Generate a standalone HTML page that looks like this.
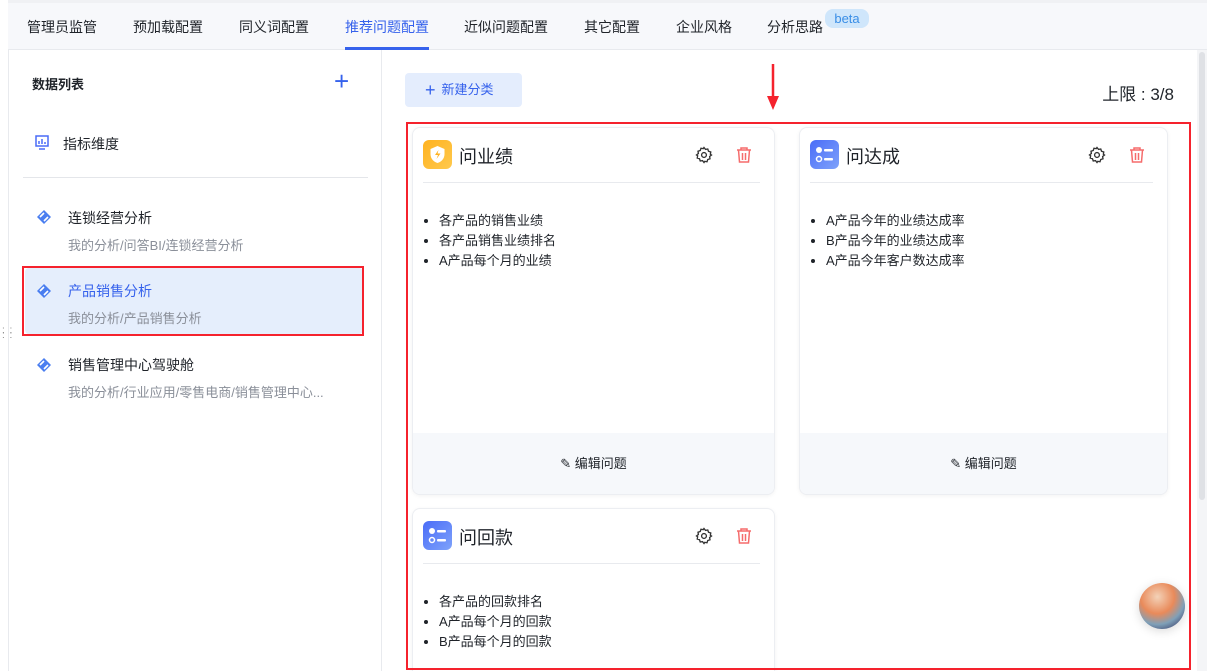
<!DOCTYPE html>
<html><head><meta charset="utf-8"><style>
*{box-sizing:border-box;margin:0;padding:0}
html,body{width:1207px;height:671px;overflow:hidden}
body{background:#fff;font-family:"Liberation Sans","Noto Sans CJK SC",sans-serif;color:#1f2329;position:relative;font-size:14px}
.abs{position:absolute}
.tabs{left:8px;top:0;width:1199px;height:50px;background:#f7f8fb;border-bottom:1px solid #e8eaee;border-top:3px solid #f0f1f4}
.tab{position:absolute;top:14px;font-size:14px;color:#1f2329;white-space:nowrap}
.side{left:8px;top:50px;width:374px;height:621px;border-right:1px solid #e8eaee;border-left:1px solid #e8eaee;background:#fff}
.card{position:absolute;background:#fff;border:1px solid #eceef2;border-radius:8px;box-shadow:0 1px 4px rgba(0,0,0,.05);overflow:hidden}
.ch{position:absolute;left:10px;right:14px;top:0;height:55px;border-bottom:1px solid #e8eaee}
.ch .t{position:absolute;left:36px;top:15px;font-size:18px;color:#1f2329}
.ico{position:absolute;left:0;top:12px;width:29px;height:29px;border-radius:6px}
ul{position:absolute;left:26px;top:83px;font-size:13px;line-height:20px;color:#1f2329}
.ft{position:absolute;left:0;right:0;bottom:0;height:61px;background:#f6f8fb;text-align:center;line-height:61px;font-size:13px}
.red{position:absolute;border:2.5px solid #f5222d}
.item .n{position:absolute;left:59px;font-size:14px}
.item .p{position:absolute;left:59px;font-size:13px;color:#8a8f99}
</style></head><body>
<div class="abs tabs">
<span class="tab" style="left:19px">管理员监管</span>
<span class="tab" style="left:125px">预加载配置</span>
<span class="tab" style="left:231px">同义词配置</span>
<span class="tab" style="left:337px;color:#3662ec">推荐问题配置</span>
<div class="abs" style="left:337px;top:44px;width:84px;height:3px;background:#3662ec"></div>
<span class="tab" style="left:456px">近似问题配置</span>
<span class="tab" style="left:576px">其它配置</span>
<span class="tab" style="left:668px">企业风格</span>
<span class="tab" style="left:759px">分析思路</span>
<span class="abs" style="left:817px;top:6px;width:44px;height:19px;background:#cfe6fb;color:#3a8ee6;border-radius:8px;font-size:13px;text-align:center;line-height:19px">beta</span>
</div>
<div class="abs side">
<div class="abs" style="left:23px;top:24px;font-size:13px;font-weight:bold">数据列表</div>
<div class="abs" style="left:325px;top:16px;font-size:26px;color:#3662ec;font-weight:300;line-height:30px">+</div>
<svg class="abs" style="left:26px;top:85px" width="14" height="16" viewBox="0 0 14 16"><rect x="1" y="1" width="12" height="10" fill="none" stroke="#4a6cf7" stroke-width="1.5"/><path d="M4 9V6M7 9V4M10 9V7M4 14h6" stroke="#4a6cf7" stroke-width="1.5"/></svg>
<div class="abs" style="left:54px;top:84px;font-size:14px">指标维度</div>
<div class="abs" style="left:14px;top:127px;width:345px;height:1px;background:#e4e6ea"></div>
<div class="item">
<svg class="abs" style="left:28px;top:160px" width="14" height="14" viewBox="0 0 14 14"><path d="M7 0L14 7 7 14 0 7Z" fill="#4a7ef0"/><path d="M3 7L7 3M7 11L11 7" stroke="#fff" stroke-width="1.6"/></svg>
<div class="n" style="top:158px">连锁经营分析</div><div class="p" style="top:185px">我的分析/问答BI/连锁经营分析</div>
</div>
<div class="abs" style="left:16px;top:218px;width:338px;height:66px;background:#e5eefc;border-radius:4px"></div>
<div class="item">
<svg class="abs" style="left:28px;top:234px" width="14" height="14" viewBox="0 0 14 14"><path d="M7 0L14 7 7 14 0 7Z" fill="#4a7ef0"/><path d="M3 7L7 3M7 11L11 7" stroke="#fff" stroke-width="1.6"/></svg>
<div class="n" style="top:231px;color:#3662ec">产品销售分析</div><div class="p" style="top:258px">我的分析/产品销售分析</div>
</div>
<div class="item">
<svg class="abs" style="left:28px;top:308px" width="14" height="14" viewBox="0 0 14 14"><path d="M7 0L14 7 7 14 0 7Z" fill="#4a7ef0"/><path d="M3 7L7 3M7 11L11 7" stroke="#fff" stroke-width="1.6"/></svg>
<div class="n" style="top:305px">销售管理中心驾驶舱</div><div class="p" style="top:332px">我的分析/行业应用/零售电商/销售管理中心...</div>
</div>
</div>
<div class="abs" style="left:2px;top:328px;font-size:10px;color:#888;line-height:5px;letter-spacing:1px">: :<br>: :</div>
<div class="red" style="left:22px;top:266px;width:342px;height:70px"></div>
<div class="abs" style="left:1197px;top:50px;width:10px;height:621px;background:#f4f5f7"></div>
<div class="abs" style="left:1199px;top:52px;width:6px;height:448px;background:#dfe1e5;border-radius:3px"></div>
<div class="abs" style="left:405px;top:73px;width:117px;height:34px;background:#e4edfd;border-radius:4px;color:#3662ec;font-size:13px;line-height:34px;padding-left:20px"><span style="font-size:18px;vertical-align:-2px;margin-right:6px">+</span>新建分类</div>
<div class="abs" style="right:33px;top:80px;font-size:17px">上限 : 3/8</div>
<svg class="abs" style="left:766px;top:64px" width="14" height="46"><path d="M7 0V36" stroke="#f5222d" stroke-width="2.5"/><path d="M1 32L7 46 13 32Z" fill="#f5222d"/></svg>

<div class="card" style="left:412px;top:127px;width:363px;height:368px">
<div class="ch"><div class="ico" style="background:linear-gradient(135deg,#ffb21f,#ffc94d)"><svg width="29" height="29" viewBox="0 0 29 29"><path d="M14.5 6l7 3v5c0 5-3.5 8-7 9-3.5-1-7-4-7-9V9z" fill="#fff"/><path d="M15.5 10l-3.5 5h3l-1.5 4 4-5.5h-3z" fill="#ffb21f"/></svg></div><div class="t">问业绩</div>
<svg class="abs" style="left:272px;top:18px" width="18" height="18" viewBox="0 0 24 24"><path d="M12 2l2 2.5 3-.5 1 3 3 1-.5 3L22 12l-2.5 2 .5 3-3 1-1 3-3-.5L12 22l-2-2.5-3 .5-1-3-3-1 .5-3L2 12l2.5-2-.5-3 3-1 1-3 3 .5z" fill="none" stroke="#333" stroke-width="1.8"/><circle cx="12" cy="12" r="3.2" fill="none" stroke="#333" stroke-width="1.8"/></svg>
<svg class="abs" style="left:312px;top:18px" width="18" height="18" viewBox="0 0 18 18"><path d="M2 4h14M6 4V2h6v2M3.5 4l1 12h9l1-12M7.5 7v7M10.5 7v7" fill="none" stroke="#f56c6c" stroke-width="1.5"/></svg></div>
<ul><li>各产品的销售业绩</li><li>各产品销售业绩排名</li><li>A产品每个月的业绩</li></ul>
<div class="ft">✎ 编辑问题</div></div>

<div class="card" style="left:799px;top:127px;width:369px;height:368px">
<div class="ch"><div class="ico" style="background:linear-gradient(135deg,#4a6cf7,#7ea2fb)"><svg width="29" height="29" viewBox="0 0 29 29"><circle cx="9" cy="10" r="3" fill="#fff"/><circle cx="9" cy="19" r="2.5" fill="none" stroke="#fff" stroke-width="1.5"/><rect x="14" y="9" width="9" height="2.5" rx="1" fill="#fff"/><rect x="14" y="18" width="9" height="2.5" rx="1" fill="#fff"/></svg></div><div class="t">问达成</div>
<svg class="abs" style="left:278px;top:18px" width="18" height="18" viewBox="0 0 24 24"><path d="M12 2l2 2.5 3-.5 1 3 3 1-.5 3L22 12l-2.5 2 .5 3-3 1-1 3-3-.5L12 22l-2-2.5-3 .5-1-3-3-1 .5-3L2 12l2.5-2-.5-3 3-1 1-3 3 .5z" fill="none" stroke="#333" stroke-width="1.8"/><circle cx="12" cy="12" r="3.2" fill="none" stroke="#333" stroke-width="1.8"/></svg>
<svg class="abs" style="left:318px;top:18px" width="18" height="18" viewBox="0 0 18 18"><path d="M2 4h14M6 4V2h6v2M3.5 4l1 12h9l1-12M7.5 7v7M10.5 7v7" fill="none" stroke="#f56c6c" stroke-width="1.5"/></svg></div>
<ul><li>A产品今年的业绩达成率</li><li>B产品今年的业绩达成率</li><li>A产品今年客户数达成率</li></ul>
<div class="ft">✎ 编辑问题</div></div>

<div class="card" style="left:412px;top:508px;width:363px;height:170px">
<div class="ch"><div class="ico" style="background:linear-gradient(135deg,#4a6cf7,#7ea2fb)"><svg width="29" height="29" viewBox="0 0 29 29"><circle cx="9" cy="10" r="3" fill="#fff"/><circle cx="9" cy="19" r="2.5" fill="none" stroke="#fff" stroke-width="1.5"/><rect x="14" y="9" width="9" height="2.5" rx="1" fill="#fff"/><rect x="14" y="18" width="9" height="2.5" rx="1" fill="#fff"/></svg></div><div class="t">问回款</div>
<svg class="abs" style="left:272px;top:18px" width="18" height="18" viewBox="0 0 24 24"><path d="M12 2l2 2.5 3-.5 1 3 3 1-.5 3L22 12l-2.5 2 .5 3-3 1-1 3-3-.5L12 22l-2-2.5-3 .5-1-3-3-1 .5-3L2 12l2.5-2-.5-3 3-1 1-3 3 .5z" fill="none" stroke="#333" stroke-width="1.8"/><circle cx="12" cy="12" r="3.2" fill="none" stroke="#333" stroke-width="1.8"/></svg>
<svg class="abs" style="left:312px;top:18px" width="18" height="18" viewBox="0 0 18 18"><path d="M2 4h14M6 4V2h6v2M3.5 4l1 12h9l1-12M7.5 7v7M10.5 7v7" fill="none" stroke="#f56c6c" stroke-width="1.5"/></svg></div>
<ul><li>各产品的回款排名</li><li>A产品每个月的回款</li><li>B产品每个月的回款</li></ul></div>

<div class="red" style="left:406px;top:122px;width:785px;height:548px"></div>
<div class="abs" style="left:1139px;top:583px;width:46px;height:46px;border-radius:50%;background:radial-gradient(circle at 40% 30%,#f3d2b8,#e98a5a 40%,#7fa0b8 65%,#3a3f6a 90%);box-shadow:0 2px 10px rgba(0,0,0,.15)"></div>
</body></html>
